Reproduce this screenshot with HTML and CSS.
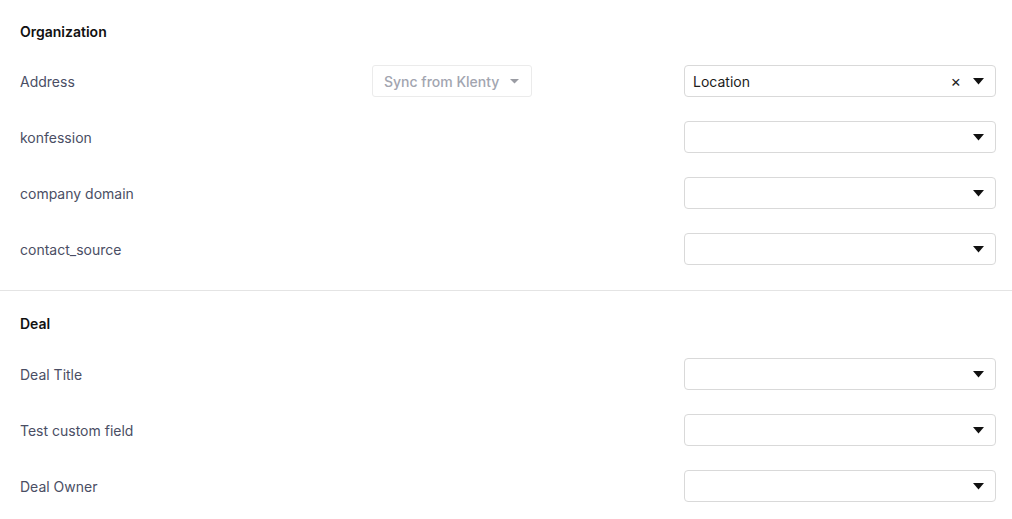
FILE: index.html
```html
<!DOCTYPE html>
<html>
<head>
<meta charset="utf-8">
<link rel="stylesheet" href="styles.css">
</head>
<body>
<div class="page">
  <section class="section first">
    <h2 class="heading">Organization</h2>
    <div class="rows">
      <div class="row">
        <span class="label">Address</span>
        <div class="sync"><span class="sync-text">Sync from Klenty</span><svg class="sync-caret" width="9" height="5" viewBox="0 0 9 5"><path d="M0 0 L9 0 L4.5 4.5 Z" fill="#9a9ca3"/></svg></div>
        <span></span>
        <div class="select"><span class="value">Location</span><span class="clear">×</span><svg class="caret" width="11" height="7" viewBox="0 0 11 7"><path d="M0 0 L11 0 L5.5 6.5 Z" fill="#111"/></svg></div>
      </div>
      <div class="row">
        <span class="label">konfession</span><span></span><span></span>
        <div class="select"><span class="value"></span><svg class="caret" width="11" height="7" viewBox="0 0 11 7"><path d="M0 0 L11 0 L5.5 6.5 Z" fill="#111"/></svg></div>
      </div>
      <div class="row">
        <span class="label">company domain</span><span></span><span></span>
        <div class="select"><span class="value"></span><svg class="caret" width="11" height="7" viewBox="0 0 11 7"><path d="M0 0 L11 0 L5.5 6.5 Z" fill="#111"/></svg></div>
      </div>
      <div class="row">
        <span class="label">contact_source</span><span></span><span></span>
        <div class="select"><span class="value"></span><svg class="caret" width="11" height="7" viewBox="0 0 11 7"><path d="M0 0 L11 0 L5.5 6.5 Z" fill="#111"/></svg></div>
      </div>
    </div>
  </section>
  <section class="section second">
    <h2 class="heading">Deal</h2>
    <div class="rows">
      <div class="row">
        <span class="label">Deal Title</span><span></span><span></span>
        <div class="select"><span class="value"></span><svg class="caret" width="11" height="7" viewBox="0 0 11 7"><path d="M0 0 L11 0 L5.5 6.5 Z" fill="#111"/></svg></div>
      </div>
      <div class="row">
        <span class="label">Test custom field</span><span></span><span></span>
        <div class="select"><span class="value"></span><svg class="caret" width="11" height="7" viewBox="0 0 11 7"><path d="M0 0 L11 0 L5.5 6.5 Z" fill="#111"/></svg></div>
      </div>
      <div class="row">
        <span class="label">Deal Owner</span><span></span><span></span>
        <div class="select"><span class="value"></span><svg class="caret" width="11" height="7" viewBox="0 0 11 7"><path d="M0 0 L11 0 L5.5 6.5 Z" fill="#111"/></svg></div>
      </div>
    </div>
  </section>
</div>
</body>
</html>
```
FILE: styles.css
```css
* { box-sizing: border-box; }
html, body { margin: 0; padding: 0; background: #fff; }
body {
  font-family: Inter, "Noto Sans", "Liberation Sans", sans-serif;
  font-size: 14px;
  color: #222;
  width: 1012px;
  height: 519px;
  overflow: hidden;
}
.section { padding: 0 16px 0 20px; }
.first { padding-top: 21px; padding-bottom: 25px; border-bottom: 1px solid #e4e4e4; }
.second { padding-top: 22px; }
.heading {
  margin: 0 0 22px 0;
  font-size: 14px;
  line-height: 22px;
  font-weight: 600;
  color: #111;
}
.second .heading { margin-bottom: 23px; }
.rows { display: flex; flex-direction: column; gap: 24px; }
.row {
  display: grid;
  grid-template-columns: 352px 160px 1fr 312px;
  align-items: center;
  height: 32px;
}
.label { color: #4a4e64; line-height: 20px; padding-top: 1px; white-space: nowrap; }
.sync {
  height: 32px;
  border: 1px solid #ebebeb;
  border-radius: 3px;
  display: flex;
  align-items: center;
  padding: 1px 0 0 11px;
  color: #a2a5b0;
  font-weight: 500;
  white-space: nowrap;
}
.sync-text { flex-shrink: 0; }
.sync-caret { flex-shrink: 0; margin-left: 11px; }
.select {
  height: 32px;
  border: 1px solid #d9d9d9;
  border-radius: 4px;
  display: flex;
  align-items: center;
  padding: 0 11px 0 8px;
}
.value { flex: 1; color: #1c1c1c; padding-top: 1px; }
.clear { font-size: 16px; color: #222; margin-right: 12px; line-height: 1; }
.caret { display: block; }
```
